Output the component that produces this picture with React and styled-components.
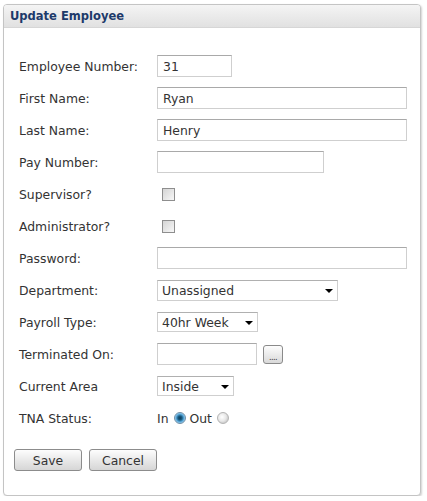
import React from "react";
import styled, { createGlobalStyle } from "styled-components";

const GlobalStyle = createGlobalStyle`
  body {
    margin: 0;
    background: #ffffff;
    font-family: "DejaVu Sans", Verdana, sans-serif;
    font-size: 12.4px;
    color: #333;
  }
`;

const Panel = styled.div`
  width: 416px;
  margin: 4px 0 0 3px;
  border: 1px solid #c4c4c4;
  border-radius: 4px;
  box-shadow: 1px 1px 2px rgba(0, 0, 0, 0.18);
  background: #fff;
  overflow: hidden;
`;

const Header = styled.div`
  height: 22px;
  line-height: 22px;
  padding-left: 6px;
  background: linear-gradient(#f4f4f4, #e1e1e1);
  border-bottom: 1px solid #d6d6d6;
  font-family: "DejaVu Sans Condensed", "DejaVu Sans", sans-serif;
  font-weight: bold;
  font-size: 12.8px;
  color: #1d3a6a;
`;

const Body = styled.div`
  padding: 27px 0 24px 15px;
`;

const Form = styled.div`
  display: grid;
  grid-template-columns: 138px 1fr;
  grid-auto-rows: 22px;
  row-gap: 10px;
  align-items: center;
`;

const Label = styled.label`
  color: #333;
  white-space: nowrap;
`;

const Field = styled.div`
  display: flex;
  align-items: center;
`;

const TextInput = styled.input`
  box-sizing: border-box;
  width: ${(p) => p.$w}px;
  height: 22px;
  padding: 0 5px;
  border: 1px solid #cfcfcf;
  border-top-color: #a9a9a9;
  font-family: inherit;
  font-size: 12.4px;
  color: #333;
  outline: none;
`;

const SelectWrap = styled.span`
  position: relative;
  display: inline-block;
  width: ${(p) => p.$w}px;
  height: ${(p) => p.$h || 20}px;

  &::after {
    content: "";
    position: absolute;
    right: 5px;
    top: 50%;
    margin-top: -1px;
    border-left: 4px solid transparent;
    border-right: 4px solid transparent;
    border-top: 4px solid #000;
    pointer-events: none;
  }
`;

const Select = styled.select`
  appearance: none;
  box-sizing: border-box;
  width: 100%;
  height: 100%;
  padding: 0 4px;
  border: 1px solid #cfcfcf;
  border-top-color: #b0b0b0;
  background: #fff;
  font-family: inherit;
  font-size: 12.4px;
  color: #333;
  outline: none;
  border-radius: 0;
`;

const Checkbox = styled.input.attrs({ type: "checkbox" })`
  appearance: none;
  box-sizing: border-box;
  width: 13px;
  height: 13px;
  margin: 0 0 0 5px;
  border: 1px solid #8e8e8e;
  background: linear-gradient(135deg, #d4d4d4, #f7f7f7);
`;

const Radio = styled.span`
  display: inline-block;
  box-sizing: border-box;
  width: 12px;
  height: 12px;
  border-radius: 50%;
  border: 1px solid ${(p) => (p.$on ? "#6e8ea6" : "#b3b3b3")};
  background: ${(p) =>
    p.$on
      ? "radial-gradient(circle at 50% 50%, #0d3a55 0, #185a80 2px, #5eaee0 4px, #cfe6f5 6px)"
      : "radial-gradient(circle at 40% 40%, #ffffff 0, #e8e8e8 4px, #cfcfcf 6px)"};
  margin: 0 4px 0 5px;
`;

const RadioText = styled.span`
  color: #333;
`;

const SmallButton = styled.button`
  box-sizing: border-box;
  width: 20px;
  height: 19px;
  margin-left: 6px;
  padding: 0;
  border: 1px solid #8a8a8a;
  border-radius: 3px;
  background: linear-gradient(#fdfdfd, #d9d9d9);
  font-family: inherit;
  font-size: 8px;
  line-height: 24px;
  color: #333;
  letter-spacing: -0.5px;
`;

const Actions = styled.div`
  display: flex;
  gap: 7px;
  margin: 20px 0 0 -5px;
`;

const Button = styled.button`
  box-sizing: border-box;
  width: 68px;
  height: 22px;
  border: 1px solid #8c8c8c;
  border-radius: 3px;
  background: linear-gradient(#fdfdfd, #e9e9e9 50%, #d6d6d6);
  font-family: inherit;
  font-size: 12.4px;
  color: #333;
  padding: 0;
`;

export default function App() {
  return (
    <>
      <GlobalStyle />
      <Panel>
        <Header>Update Employee</Header>
        <Body>
          <Form>
            <Label>Employee Number:</Label>
            <Field>
              <TextInput $w={75} defaultValue="31" />
            </Field>

            <Label>First Name:</Label>
            <Field>
              <TextInput $w={250} defaultValue="Ryan" />
            </Field>

            <Label>Last Name:</Label>
            <Field>
              <TextInput $w={250} defaultValue="Henry" />
            </Field>

            <Label>Pay Number:</Label>
            <Field>
              <TextInput $w={167} />
            </Field>

            <Label>Supervisor?</Label>
            <Field>
              <Checkbox />
            </Field>

            <Label>Administrator?</Label>
            <Field>
              <Checkbox />
            </Field>

            <Label>Password:</Label>
            <Field>
              <TextInput $w={250} type="password" />
            </Field>

            <Label>Department:</Label>
            <Field>
              <SelectWrap $w={181} $h={21}>
                <Select defaultValue="Unassigned">
                  <option>Unassigned</option>
                </Select>
              </SelectWrap>
            </Field>

            <Label>Payroll Type:</Label>
            <Field>
              <SelectWrap $w={101}>
                <Select defaultValue="40hr Week">
                  <option>40hr Week</option>
                </Select>
              </SelectWrap>
            </Field>

            <Label>Terminated On:</Label>
            <Field>
              <TextInput $w={100} />
              <SmallButton>....</SmallButton>
            </Field>

            <Label>Current Area</Label>
            <Field>
              <SelectWrap $w={77}>
                <Select defaultValue="Inside">
                  <option>Inside</option>
                </Select>
              </SelectWrap>
            </Field>

            <Label>TNA Status:</Label>
            <Field>
              <RadioText>In</RadioText>
              <Radio $on />
              <RadioText>Out</RadioText>
              <Radio />
            </Field>
          </Form>
          <Actions>
            <Button>Save</Button>
            <Button>Cancel</Button>
          </Actions>
        </Body>
      </Panel>
    </>
  );
}
